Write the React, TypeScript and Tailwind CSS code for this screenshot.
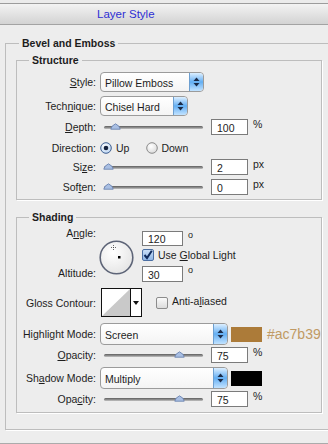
import React from "react";

function U({ children }: { children: React.ReactNode }) {
  return <span className="underline underline-offset-[1px]">{children}</span>;
}

function Label({ children, className = "" }: { children: React.ReactNode; className?: string }) {
  return <div className={`w-[79px] shrink-0 text-right ${className}`}>{children}</div>;
}

function Arrows() {
  return (
    <svg width="7" height="10" viewBox="0 0 7 10">
      <path d="M3.5 0.5 L6.5 4 L0.5 4 Z" fill="#1b2b48" />
      <path d="M3.5 9.5 L6.5 6 L0.5 6 Z" fill="#1b2b48" />
    </svg>
  );
}

function Select({ value, w, h }: { value: string; w: string; h: string }) {
  return (
    <div className={`ml-[4px] flex ${w} ${h} items-center overflow-hidden rounded-[4px] border border-[#9b9b9b] bg-gradient-to-b from-white to-[#f4f4f4]`}>
      <span className="flex-1 pl-[4px] pt-[2px]">{value}</span>
      <div className="flex h-full w-[14px] items-center justify-center rounded-r-[3px] border-l border-[#6d9fd0] bg-gradient-to-b from-[#dcefff] via-[#62aef2] to-[#c2e3ff]">
        <Arrows />
      </div>
    </div>
  );
}

function Slider({ pos }: { pos: number }) {
  return (
    <div className="relative ml-[8px] flex h-[16px] w-[99px] items-center">
      <div className="h-[3px] w-full rounded-full bg-gradient-to-b from-[#5f5f5f] via-[#8a8a8a] to-[#c4c4c4]" />
      <svg
        className="absolute top-[4px]"
        style={{ left: pos - 5 }}
        width="11"
        height="7"
        viewBox="0 0 11 7"
      >
        <path d="M0.8 6.2 Q1 3 5.5 0.8 Q10 3 10.2 6.2 Z" fill="#a9bfe3" stroke="#6d84b1" strokeWidth="0.9" />
      </svg>
    </div>
  );
}

function Num({ value, w = "w-[37px]", h = "h-[16px]", className = "" }: { value: string; w?: string; h?: string; className?: string }) {
  return (
    <div className={`flex ${w} ${h} shrink-0 items-center border border-[#7b7b7b] bg-white pl-[5px] pt-[1px] ${className}`}>
      {value}
    </div>
  );
}

function SliderRow({ label, pos, value, unit, className = "" }: { label: React.ReactNode; pos: number; value: string; unit: string; className?: string }) {
  return (
    <div className={`flex h-[16px] items-center ${className}`}>
      <Label>{label}</Label>
      <Slider pos={pos} />
      <Num value={value} className="ml-[8px]" />
      <span className="ml-[5px] self-start leading-[10px]">{unit}</span>
    </div>
  );
}

function Radio({ on }: { on: boolean }) {
  return (
    <svg width="12" height="12" viewBox="0 0 12 12">
      <defs>
        <radialGradient id={on ? "ron" : "roff"} cx="0.4" cy="0.35" r="0.7">
          <stop offset="0" stopColor="#ffffff" />
          <stop offset="1" stopColor={on ? "#b9d4f3" : "#d9d9d9"} />
        </radialGradient>
      </defs>
      <circle cx="6" cy="6" r="5.3" fill={`url(#${on ? "ron" : "roff"})`} stroke={on ? "#3f5f8f" : "#8b8b8b"} strokeWidth="1" />
      {on && <circle cx="6" cy="6" r="2.3" fill="#14213d" />}
    </svg>
  );
}

function Check({ on }: { on: boolean }) {
  return (
    <div
      className={`flex h-[12px] w-[12px] shrink-0 items-center justify-center rounded-[2px] border ${
        on ? "border-[#4b6fa3] bg-gradient-to-b from-[#c9def7] to-[#8fb6e6]" : "border-[#8c8c8c] bg-gradient-to-b from-[#fafafa] to-[#dcdcdc]"
      }`}
    >
      {on && (
        <svg width="10" height="10" viewBox="0 0 10 10">
          <path d="M1.5 5 L4 8 L8.8 0.8" fill="none" stroke="#0f2a5c" strokeWidth="2" />
        </svg>
      )}
    </div>
  );
}

function AngleDial() {
  return (
    <svg className="ml-[3px] mt-[13px] shrink-0" width="35" height="35" viewBox="0 0 35 35">
      <defs>
        <radialGradient id="dial" cx="0.4" cy="0.35" r="0.75">
          <stop offset="0" stopColor="#ffffff" />
          <stop offset="1" stopColor="#e2e2e2" />
        </radialGradient>
      </defs>
      <circle cx="17.5" cy="17.5" r="16.3" fill="url(#dial)" stroke="#5d6477" strokeWidth="1.6" />
      <path d="M14.5 5 V10 M12 7.5 H17" stroke="#444" strokeWidth="0.8" strokeDasharray="1 1" />
      <rect x="19" y="16" width="2.5" height="2.5" fill="#000" />
    </svg>
  );
}

function Contour() {
  return (
    <div className="ml-[5px] flex h-[29px] w-[41px] border border-[#111] bg-white">
      <svg width="28" height="27" viewBox="0 0 28 27">
        <path d="M0 27 L28 0 L28 27 Z" fill="#c9c9c9" />
      </svg>
      <div className="flex flex-1 items-center justify-center border-l border-[#111]">
        <svg width="6" height="4" viewBox="0 0 6 4">
          <path d="M0 0 H6 L3 4 Z" fill="#111" />
        </svg>
      </div>
    </div>
  );
}

export default function App() {
  return (
    <div className="flex h-[444px] w-[328px] flex-col overflow-hidden border-b border-[#ababab] bg-[#ededed] font-['Liberation_Sans',Arial,sans-serif] text-[10.5px] leading-[12px] text-[#1d1d1d]">
      <div className="h-[4px] shrink-0 border-b border-[#9c9c9c] bg-[#ebebeb]" />
      <div className="flex h-[21px] shrink-0 items-center border-b border-[#a3a3a3] bg-gradient-to-b from-[#f3f3f3] to-[#d3d3d3] pl-[97px] text-[11.5px] text-[#2f2fd4]">
        Layer Style
      </div>

      <fieldset className="ml-[5px] mr-[12px] mt-[12px] border border-[#bdbdbd] pb-[16px] shadow-[1px_1px_0_#fff]">
        <legend className="ml-[13px] px-[3px] font-bold leading-[12px]">Bevel and Emboss</legend>

        <fieldset className="mx-[10px] mt-[5px] border border-[#bdbdbd] pb-[4px] shadow-[1px_1px_0_#fff]">
          <legend className="ml-[12px] px-[3px] font-bold leading-[12px]">Structure</legend>

          <div className="mt-[6px] flex h-[20px] items-center">
            <Label><U>S</U>tyle:</Label>
            <Select value="Pillow Emboss" w="w-[104px]" h="h-[20px]" />
          </div>
          <div className="mt-[4px] flex h-[20px] items-center">
            <Label>Tech<U>n</U>ique:</Label>
            <Select value="Chisel Hard" w="w-[88px]" h="h-[20px]" />
          </div>
          <SliderRow className="mt-[3px]" label={<><U>D</U>epth:</>} pos={11} value="100" unit="%" />
          <div className="mt-[3px] flex h-[20px] items-center">
            <Label>Direction:</Label>
            <div className="ml-[4px] flex items-center">
              <Radio on />
              <span className="ml-[4px]">Up</span>
            </div>
            <div className="ml-[17px] flex items-center">
              <Radio on={false} />
              <span className="ml-[3px]">Down</span>
            </div>
          </div>
          <SliderRow className="mt-[1px]" label={<>Si<U>z</U>e:</>} pos={4} value="2" unit="px" />
          <SliderRow className="mt-[4px]" label={<>Sof<U>t</U>en:</>} pos={4} value="0" unit="px" />
        </fieldset>

        <fieldset className="mx-[10px] mt-[11px] border border-[#bdbdbd] pb-[5px] shadow-[1px_1px_0_#fff]">
          <legend className="ml-[12px] px-[3px] font-bold leading-[12px]">Shading</legend>

          <div className="mt-[4px] flex">
            <div className="flex w-[79px] shrink-0 flex-col items-end">
              <span className="leading-[12px]">A<U>n</U>gle:</span>
              <span className="mt-[28px] leading-[12px]">Altitude:</span>
            </div>
            <AngleDial />
            <div className="ml-[8px] flex flex-col">
              <div className="mt-[4px] flex items-start">
                <Num value="120" w="w-[41px]" h="h-[15px]" />
                <span className="ml-[5px] text-[9px] leading-[8px]">o</span>
              </div>
              <div className="mt-[3px] flex h-[12px] items-center">
                <Check on />
                <span className="ml-[4px]">Use <U>G</U>lobal Light</span>
              </div>
              <div className="mt-[5px] flex items-start">
                <Num value="30" w="w-[41px]" h="h-[16px]" />
                <span className="ml-[5px] text-[9px] leading-[8px]">o</span>
              </div>
            </div>
          </div>

          <div className="mt-[6px] flex h-[29px] items-center">
            <Label>Gloss Contour:</Label>
            <Contour />
            <div className="ml-[14px] flex items-center">
              <Check on={false} />
              <span className="ml-[4px] -mt-[3px]">Anti-a<U>l</U>iased</span>
            </div>
          </div>

          <div className="mt-[6px] flex h-[22px] items-center">
            <Label>Hi<U>g</U>hlight Mode:</Label>
            <Select value="Screen" w="w-[128px]" h="h-[22px]" />
            <div className="ml-[3px] h-[15px] w-[31px] bg-[#ac7b39]" />
            <span className="ml-[5px] text-[14px] leading-[14px] text-[#c09a64]">#ac7b39</span>
          </div>
          <SliderRow className="mt-[2px]" label={<><U>O</U>pacity:</>} pos={75} value="75" unit="%" />
          <div className="mt-[4px] flex h-[22px] items-center">
            <Label>Sh<U>a</U>dow Mode:</Label>
            <Select value="Multiply" w="w-[128px]" h="h-[22px]" />
            <div className="ml-[3px] h-[15px] w-[31px] bg-black" />
          </div>
          <SliderRow className="mt-[2px]" label={<>Opa<U>c</U>ity:</>} pos={75} value="75" unit="%" />
        </fieldset>
      </fieldset>
    </div>
  );
}
